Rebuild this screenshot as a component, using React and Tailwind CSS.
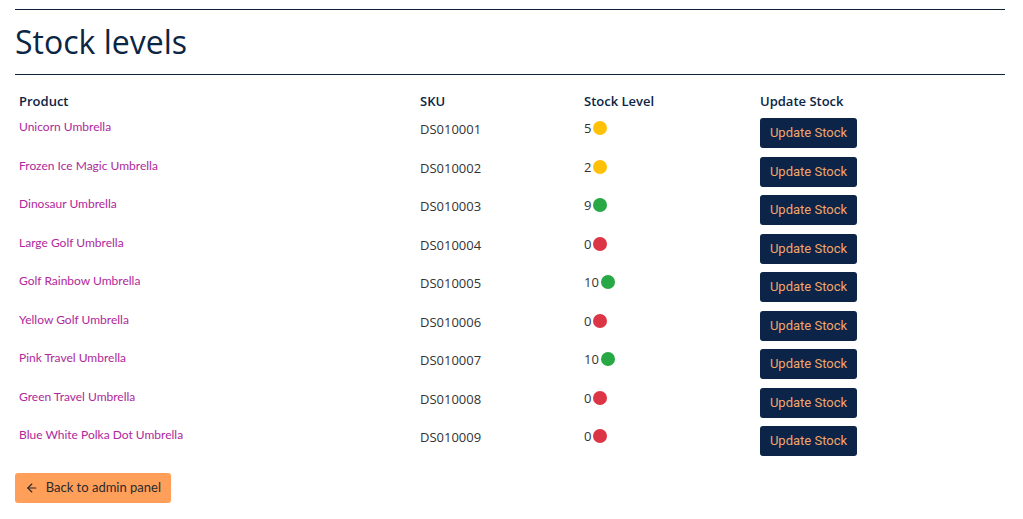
import { ArrowLeft } from "lucide-react";

const rows = [
    { name: "Unicorn Umbrella", sku: "DS010001", stock: 5 },
    { name: "Frozen Ice Magic Umbrella", sku: "DS010002", stock: 2 },
    { name: "Dinosaur Umbrella", sku: "DS010003", stock: 9 },
    { name: "Large Golf Umbrella", sku: "DS010004", stock: 0 },
    { name: "Golf Rainbow Umbrella", sku: "DS010005", stock: 10 },
    { name: "Yellow Golf Umbrella", sku: "DS010006", stock: 0 },
    { name: "Pink Travel Umbrella", sku: "DS010007", stock: 10 },
    { name: "Green Travel Umbrella", sku: "DS010008", stock: 0 },
    { name: "Blue White Polka Dot Umbrella", sku: "DS010009", stock: 0 },
];

const dotClass = (n) => {
    if (n === 0) return "bg-[#dc3545]";
    if (n < 6) return "bg-[#ffc107]";
    return "bg-[#28a745]";
};

export default function App() {
    return (
        <div className="min-h-screen bg-white pl-[15px] pr-[18px] pt-[9px] font-['Open_Sans',sans-serif] text-[#1f2937]">
            <hr className="border-t border-[#0d2137]" />
            <h1 className="h-[64px] pt-[13px] text-[32px] leading-[38px] font-normal text-[#0b2545]">Stock levels</h1>
            <hr className="border-t border-[#0d2137]" />

            <table className="mt-[14px] w-full table-fixed border-collapse text-[13px]">
                <thead>
                    <tr className="text-[#0b2545]">
                        <th className="w-[401px] px-1 h-[26px] text-left font-semibold">Product</th>
                        <th className="w-[164px] px-1 text-left font-semibold">SKU</th>
                        <th className="w-[176px] px-1 text-left font-semibold">Stock Level</th>
                        <th className="px-1 text-left font-semibold">Update Stock</th>
                    </tr>
                </thead>
                <tbody>
                    {rows.map((row) => (
                        <tr key={row.sku} className="h-[38.5px]">
                            <td className="px-1 pt-[2px] align-top">
                                <a href="#" className="font-['Lato',sans-serif] text-[12px] leading-4 text-[#b0279b]">{row.name}</a>
                            </td>
                            <td className="px-1 pt-[4px] align-top leading-5 text-[#333]">{row.sku}</td>
                            <td className="px-1 pt-[3px] align-top leading-5 text-[#333]">
                                <span className="inline-flex items-center">
                                    {row.stock}
                                    <span className={`ml-[2px] inline-block h-[14px] w-[14px] rounded-full ${dotClass(row.stock)}`}></span>
                                </span>
                            </td>
                            <td className="px-1 pt-[3px] pb-1 align-top">
                                <button className="h-[30px] w-[97px] rounded-[3px] bg-[#0b2447] font-['Roboto',sans-serif] text-[13px] text-[#f4a46c]">Update Stock</button>
                            </td>
                        </tr>
                    ))}
                </tbody>
            </table>

            <button className="mt-[11px] flex h-[30px] w-[156px] items-center gap-[7px] whitespace-nowrap rounded-[3px] bg-[#ff9f5a] px-[10px] font-['Lato',sans-serif] text-[13px] text-[#2b2b2b]">
                <ArrowLeft size={14} strokeWidth={2} />
                Back to admin panel
            </button>
        </div>
    );
}
